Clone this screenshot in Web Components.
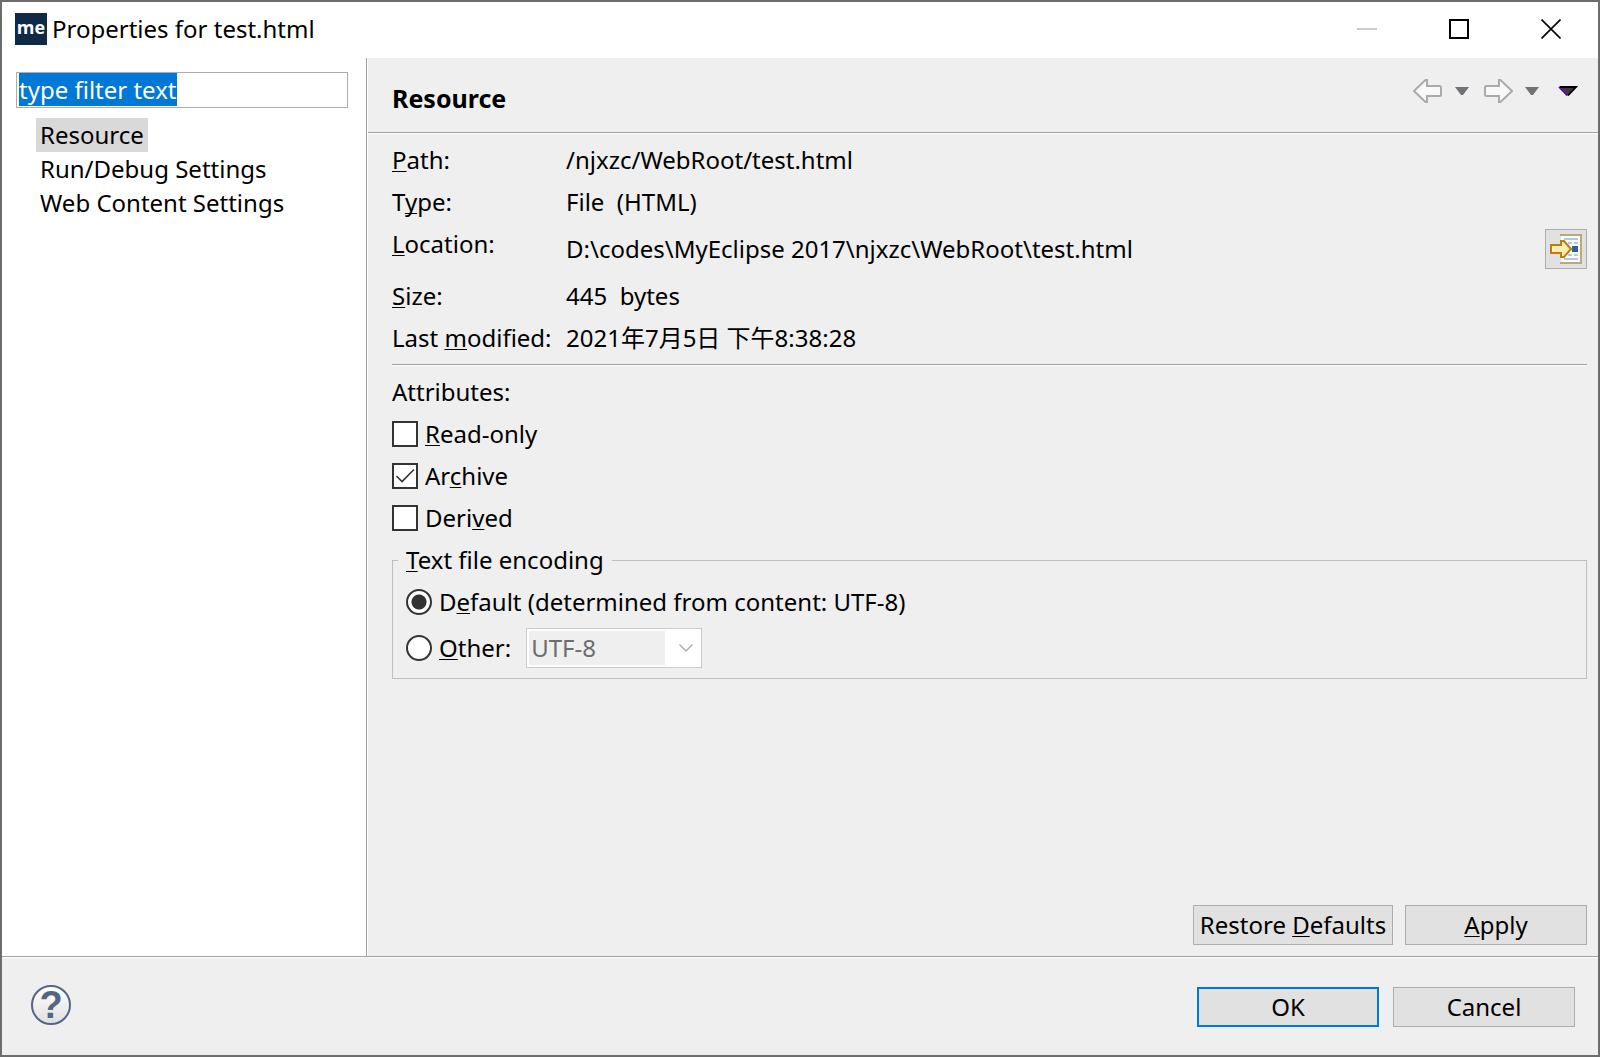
<!DOCTYPE html>
<html lang="en">
<head>
<meta charset="utf-8">
<title>Properties for test.html</title>
<style>
  body {
    margin: 0;
    font: 24px/34px "Noto Sans", "Noto Sans CJK SC", sans-serif;
    color: #000;
    background-color: #efefef;
  }

  u {
    text-decoration-thickness: 1px;
    text-underline-offset: 2px;
    text-decoration-skip-ink: none;
  }
</style>
</head>
<body>
<properties-dialog>
  <title-bar slot="title">Properties for test.html</title-bar>
  <page-tree slot="tree"></page-tree>
  <page-header slot="page">Resource</page-header>
  <resource-page slot="page"></resource-page>
  <push-button slot="page-actions" class="snug">Restore <u>D</u>efaults</push-button>
  <push-button slot="page-actions"><u>A</u>pply</push-button>
  <push-button slot="dialog-actions" class="default">OK</push-button>
  <push-button slot="dialog-actions">Cancel</push-button>
</properties-dialog>

<script>
/**
 * Base class, fills an open shadow root with the element's own template.
 */
class TemplateElement extends HTMLElement {

  constructor() {
    super();
    this.attachShadow({ mode: 'open' });
    const template = document.createElement('template');
    template.innerHTML = this.constructor.markup;
    this.shadowRoot.appendChild(template.content.cloneNode(true));
  }

}

/**
 * Properties Dialog.
 *
 * The window frame: title, tree on the left, page on the right, footer.
 */
class PropertiesDialog extends TemplateElement {

  static markup = `
    <style>
      :host {
        display: flex;
        flex-direction: column;
        min-height: 100vh;
        box-sizing: border-box;
        border: 2px solid #6d6d6d;
      }

      .main {
        flex: 1;
        display: flex;
      }

      aside {
        width: 364px;
        flex: none;
        background-color: #fff;
        border-right: 1px solid #a0a0a0;
      }

      main {
        flex: 1;
        min-width: 0;
        display: flex;
        flex-direction: column;
        border-left: 1px solid #fff;
      }

      .page-actions {
        display: flex;
        justify-content: flex-end;
        gap: 12px;
        margin-top: auto;
        padding: 11px;
      }

      footer {
        display: flex;
        align-items: flex-end;
        gap: 14px;
        min-height: 42px;
        padding: 28px 23px 28px 29px;
        border-top: 1px solid #a0a0a0;
        box-shadow: inset 0 1px #fff;
      }

      .help {
        align-self: flex-start;
        width: 40px;
        height: 40px;
        margin-right: auto;
        padding: 0;
        box-sizing: border-box;
        border: 2px solid #536684;
        border-radius: 50%;
        background: linear-gradient(#fff, #e0e0e0);
        color: #536684;
        font: bold 38px/36px "Liberation Sans", sans-serif;
      }
    </style>
    <slot name="title"></slot>
    <div class="main">
      <aside><slot name="tree"></slot></aside>
      <main>
        <slot name="page"></slot>
        <div class="page-actions"><slot name="page-actions"></slot></div>
      </main>
    </div>
    <footer>
      <button class="help" aria-label="Help">?</button>
      <slot name="dialog-actions"></slot>
    </footer>
  `;

}

/**
 * Title Bar.
 */
class TitleBar extends TemplateElement {

  static markup = `
    <style>
      :host {
        display: flex;
        align-items: center;
        height: 54px;
        padding: 0 1px 2px 13px;
        background-color: #fff;
      }

      .logo {
        width: 32px;
        height: 32px;
        margin-right: 5px;
        background-color: #0e2a47;
        color: #fff;
        font: bold 18px/28px "Open Sans", sans-serif;
        text-align: center;
      }

      h1 {
        flex: 1;
        margin: 0;
        font: inherit;
      }

      button {
        width: 92px;
        height: 54px;
        padding: 0;
        border: none;
        background-color: transparent;
      }

      svg {
        display: block;
        margin: auto;
      }
    </style>
    <div class="logo">me</div>
    <h1><slot></slot></h1>
    <button aria-label="Minimize" disabled>
      <svg width="20" height="20"><path d="M0 10H20" stroke="#ccc" stroke-width="2"/></svg>
    </button>
    <button aria-label="Maximize">
      <svg width="20" height="20"><rect x="1" y="1" width="18" height="18" fill="none" stroke="#000" stroke-width="2"/></svg>
    </button>
    <button aria-label="Close">
      <svg width="20" height="20"><path d="M.5 .5L19.500 19.500M19.500 .5L.5 19.500" stroke="#000" stroke-width="1.600"/></svg>
    </button>
  `;

}

/**
 * Page Tree.
 *
 * Filter box and the list of property pages.
 */
class PageTree extends TemplateElement {

  static markup = `
    <style>
      :host {
        display: block;
        padding: 14px 18px 14px 14px;
      }

      input {
        display: block;
        width: 100%;
        height: 36px;
        box-sizing: border-box;
        padding: 0 2px 2px;
        border: 1px solid #abadb3;
        outline: none;
        font: inherit;
        line-height: 32px;
        caret-color: transparent;
      }

      input::selection {
        background-color: #0078d7;
        color: #fff;
      }

      ul {
        margin: 10px 0 0;
        padding: 0 0 0 20px;
        list-style: none;
      }

      a {
        display: inline-block;
        padding: 0 4px;
        color: inherit;
        text-decoration: none;
        vertical-align: top;
      }

      a[aria-current] {
        background-color: #d9d9d9;
      }
    </style>
    <input type="text" value="type filter text" aria-label="Filter">
    <ul>
      <li><a href="#resource" aria-current="page">Resource</a></li>
      <li><a href="#run-debug">Run/Debug Settings</a></li>
      <li><a href="#web-content">Web Content Settings</a></li>
    </ul>
  `;

  /**
   * Select the filter text, so that typing replaces it.
   */
  connectedCallback() {
    const input = this.shadowRoot.querySelector('input');
    input.focus();
    input.select();
  }

}

/**
 * Page Header.
 *
 * Page title with the history buttons.
 */
class PageHeader extends TemplateElement {

  static markup = `
    <style>
      :host {
        display: flex;
        justify-content: space-between;
        height: 74px;
        padding: 0 20px 0 24px;
        border-bottom: 1px solid #a0a0a0;
        box-shadow: 0 1px #fff;
      }

      h2 {
        margin: 0;
        padding-top: 23px;
        font: inherit;
        font-size: 25px;
        font-weight: bold;
      }

      nav {
        display: flex;
        align-items: center;
        gap: 12px;
        height: 66px;
      }

      button {
        padding: 0;
        border: none;
        background-color: transparent;
      }

      svg {
        display: block;
      }

      .forward {
        margin-left: 2px;
      }

      .menu {
        margin-left: 7px;
      }
    </style>
    <h2><slot></slot></h2>
    <nav>
      <button aria-label="Back">
        <svg width="30" height="24" viewBox="0 0 30 24">
          <path d="M1 12L12.500 1H14V7H26.500Q28 7 28 8.500V15.500Q28 17 26.500 17H14V23H12.500Z" fill="#f8f8f8" stroke="#aaa" stroke-width="2"/>
        </svg>
      </button>
      <button aria-label="Back history">
        <svg width="14" height="8"><path d="M0 0H14L8 8H6Z" fill="#707276"/></svg>
      </button>
      <button class="forward" aria-label="Forward">
        <svg width="30" height="24" viewBox="0 0 30 24">
          <path d="M29 12L17.500 1H16V7H3.500Q2 7 2 8.500V15.500Q2 17 3.500 17H16V23H17.500Z" fill="#f8f8f8" stroke="#aaa" stroke-width="2"/>
        </svg>
      </button>
      <button aria-label="Forward history">
        <svg width="14" height="8"><path d="M0 0H14L8 8H6Z" fill="#707276"/></svg>
      </button>
      <button class="menu" aria-label="View menu">
        <svg width="20" height="12" viewBox="0 0 20 12">
          <path d="M2 2H18L10 10Z" fill="#49304d"/>
          <path d="M1 1.800L9.500 10.500" stroke="#4409a8" stroke-width="1.800"/>
          <path d="M2 2H18L10 10.500" fill="none" stroke="#000" stroke-width="1.800"/>
        </svg>
      </button>
    </nav>
  `;

}

/**
 * Resource Page.
 *
 * File details, attributes and encoding of a resource.
 */
class ResourcePage extends TemplateElement {

  static markup = `
    <style>
      :host {
        display: block;
        padding: 10px 11px 0 24px;
      }

      u {
        text-decoration-thickness: 1px;
        text-underline-offset: 2px;
        text-decoration-skip-ink: none;
      }

      dl {
        display: grid;
        grid-template-columns: 158px 1fr;
        gap: 8px 16px;
        margin: 0;
        padding-bottom: 9px;
        border-bottom: 1px solid #a0a0a0;
        box-shadow: 0 1px #fff;
      }

      dt {
        white-space: nowrap;
      }

      dd {
        display: flex;
        align-items: center;
        justify-content: space-between;
        margin: 0;
        white-space: pre;
      }

      dd button {
        width: 42px;
        height: 40px;
        margin: 2px 0;
        padding: 0;
        border: 1px solid #adadad;
        background-color: #e1e1e1;
      }

      dd svg {
        display: block;
        margin: auto;
      }

      .attributes {
        display: grid;
        gap: 8px;
        padding: 10px 0 8px;
      }
    </style>
    <dl>
      <dt><u>P</u>ath:</dt>
      <dd>/njxzc/WebRoot/test.html</dd>
      <dt>T<u>y</u>pe:</dt>
      <dd>File  (HTML)</dd>
      <dt><u>L</u>ocation:</dt>
      <dd>D:\\codes\\MyEclipse 2017\\njxzc\\WebRoot\\test.html<button aria-label="Show in system explorer"><svg width="32" height="32" viewBox="0 0 32 32">
        <path d="M11 2H31V30H11Z" fill="#f7faff"/>
        <path d="M10 1H32V31H10V29H30V3H10Z" fill="#b9ab72"/>
        <path d="M14 6H28M14 26H28" stroke="#b7c4e2" stroke-width="2"/>
        <path d="M18 10H22M24 10H28M18 22H22M24 22H28" stroke="#b7c4e2" stroke-width="2"/>
        <path d="M22 13H28V19H22Z" fill="#2c5fa4"/>
        <path d="M1 12H11V8H14L21 16L14 24H11V20H1Z" fill="#ffeeb0" stroke="#bd7d10" stroke-width="2"/>
      </svg></button></dd>
      <dt><u>S</u>ize:</dt>
      <dd>445  bytes</dd>
      <dt>Last <u>m</u>odified:</dt>
      <dd>2021年7月5日 下午8:38:28</dd>
    </dl>
    <div class="attributes">
      <div>Attributes:</div>
      <check-option><u>R</u>ead-only</check-option>
      <check-option checked>Ar<u>c</u>hive</check-option>
      <check-option>Deri<u>v</u>ed</check-option>
    </div>
    <encoding-group></encoding-group>
  `;

}

/**
 * Check Option.
 *
 * A tick box with its label.
 */
class CheckOption extends TemplateElement {

  static markup = `
    <style>
      :host {
        display: block;
      }

      label {
        display: inline-flex;
        align-items: center;
        gap: 7px;
        vertical-align: top;
      }

      .box {
        display: grid;
      }

      input, svg {
        grid-area: 1 / 1;
      }

      input {
        appearance: none;
        width: 26px;
        height: 26px;
        margin: 0;
        box-sizing: border-box;
        border: 2px solid #333;
        background-color: #fff;
      }

      svg {
        visibility: hidden;
        pointer-events: none;
      }

      input:checked + svg {
        visibility: visible;
      }
    </style>
    <label>
      <span class="box">
        <input type="checkbox">
        <svg width="26" height="26"><path d="M4.500 13L10 18.500L22 6.500" fill="none" stroke="#333" stroke-width="1.600"/></svg>
      </span>
      <span><slot></slot></span>
    </label>
  `;

  connectedCallback() {
    this.shadowRoot.querySelector('input').checked =
      this.hasAttribute('checked');
  }

}

/**
 * Encoding Group.
 *
 * Both radio buttons share one shadow root, to be in the same radio group.
 */
class EncodingGroup extends TemplateElement {

  static markup = `
    <style>
      :host {
        display: block;
      }

      u {
        text-decoration-thickness: 1px;
        text-underline-offset: 2px;
        text-decoration-skip-ink: none;
      }

      fieldset {
        display: grid;
        gap: 9px;
        min-width: 0;
        margin: 0;
        padding: 8px 13px 10px;
        border: 1px solid #bfbfbf;
      }

      legend {
        margin-left: -8px;
        padding: 0 8px;
      }

      .row {
        display: flex;
        align-items: center;
        gap: 15px;
      }

      label {
        display: flex;
        align-items: center;
        gap: 7px;
      }

      input {
        appearance: none;
        width: 26px;
        height: 26px;
        margin: 0;
        box-sizing: border-box;
        border: 2px solid #333;
        border-radius: 50%;
        background-color: #fff;
      }

      input:checked {
        background-image: radial-gradient(circle, #333 7px, transparent 8px);
      }

      .combo {
        display: grid;
        align-items: center;
      }

      select, svg {
        grid-area: 1 / 1;
      }

      select {
        appearance: none;
        width: 176px;
        height: 40px;
        padding: 0 0 0 4px;
        border: 1px solid #ccc;
        border-radius: 0;
        background: linear-gradient(#efefef, #efefef) 2px 2px / 136px 34px no-repeat #fff;
        color: #6d6d6d;
        font: inherit;
        opacity: 1;
      }

      svg {
        justify-self: end;
        margin-right: 9px;
        pointer-events: none;
      }
    </style>
    <fieldset>
      <legend><u>T</u>ext file encoding</legend>
      <div class="row">
        <label><input type="radio" name="encoding" checked><span>D<u>e</u>fault (determined from content: UTF-8)</span></label>
      </div>
      <div class="row">
        <label><input type="radio" name="encoding"><span><u>O</u>ther:</span></label>
        <span class="combo">
          <select aria-label="Other encoding" disabled>
            <option>UTF-8</option>
          </select>
          <svg width="14" height="8"><path d="M.5 .5L7 7L13.500 .5" fill="none" stroke="#aaa" stroke-width="1.400"/></svg>
        </span>
      </div>
    </fieldset>
  `;

}

/**
 * Push Button.
 */
class PushButton extends TemplateElement {

  static markup = `
    <style>
      :host {
        display: block;
      }

      button {
        width: 182px;
        height: 40px;
        padding: 0;
        border: 1px solid #adadad;
        background-color: #e1e1e1;
        color: #000;
        font: inherit;
        white-space: nowrap;
        display: block;
      }

      :host(.snug) button {
        width: auto;
        min-width: 200px;
      }

      :host(.default) button {
        border: 2px solid #0078d7;
      }
    </style>
    <button><slot></slot></button>
  `;

}

// Register custom elements
customElements.define('push-button', PushButton);
customElements.define('check-option', CheckOption);
customElements.define('encoding-group', EncodingGroup);
customElements.define('title-bar', TitleBar);
customElements.define('page-tree', PageTree);
customElements.define('page-header', PageHeader);
customElements.define('resource-page', ResourcePage);
customElements.define('properties-dialog', PropertiesDialog);
</script>
</body>
</html>
